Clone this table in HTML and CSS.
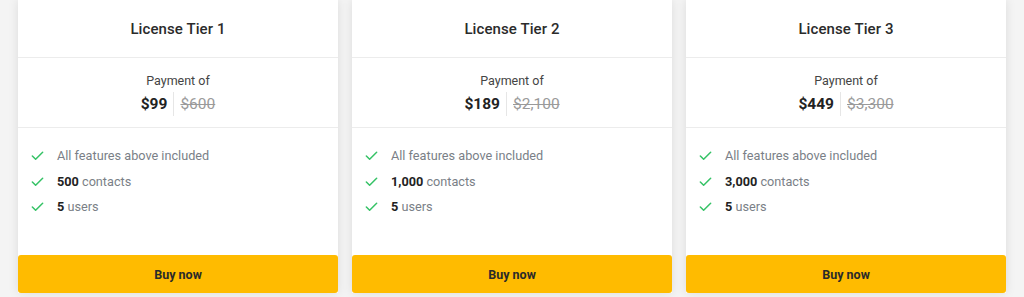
FILE: index.html
```html
<!DOCTYPE html>
<html lang="en">
<head>
<meta charset="utf-8">
<title>License Tiers</title>
<link rel="stylesheet" href="styles.css">
</head>
<body>
<div class="tiers">
  <div class="card">
    <div class="card-head"><h2 class="title">License Tier 1</h2></div>
    <div class="price-box">
      <div class="pay-label">Payment of</div>
      <div class="price-row"><span class="price">$99</span><span class="old">$600</span></div>
    </div>
    <ul class="features">
      <li><svg class="check" viewBox="0 0 16 16"><path d="M2.5 8.5l3.5 3.5 7.5-7.5"/></svg><span>All features above included</span></li>
      <li><svg class="check" viewBox="0 0 16 16"><path d="M2.5 8.5l3.5 3.5 7.5-7.5"/></svg><span><b>500</b> contacts</span></li>
      <li><svg class="check" viewBox="0 0 16 16"><path d="M2.5 8.5l3.5 3.5 7.5-7.5"/></svg><span><b>5</b> users</span></li>
    </ul>
    <button class="buy">Buy now</button>
  </div>
  <div class="card">
    <div class="card-head"><h2 class="title">License Tier 2</h2></div>
    <div class="price-box">
      <div class="pay-label">Payment of</div>
      <div class="price-row"><span class="price">$189</span><span class="old">$2,100</span></div>
    </div>
    <ul class="features">
      <li><svg class="check" viewBox="0 0 16 16"><path d="M2.5 8.5l3.5 3.5 7.5-7.5"/></svg><span>All features above included</span></li>
      <li><svg class="check" viewBox="0 0 16 16"><path d="M2.5 8.5l3.5 3.5 7.5-7.5"/></svg><span><b>1,000</b> contacts</span></li>
      <li><svg class="check" viewBox="0 0 16 16"><path d="M2.5 8.5l3.5 3.5 7.5-7.5"/></svg><span><b>5</b> users</span></li>
    </ul>
    <button class="buy">Buy now</button>
  </div>
  <div class="card">
    <div class="card-head"><h2 class="title">License Tier 3</h2></div>
    <div class="price-box">
      <div class="pay-label">Payment of</div>
      <div class="price-row"><span class="price">$449</span><span class="old">$3,300</span></div>
    </div>
    <ul class="features">
      <li><svg class="check" viewBox="0 0 16 16"><path d="M2.5 8.5l3.5 3.5 7.5-7.5"/></svg><span>All features above included</span></li>
      <li><svg class="check" viewBox="0 0 16 16"><path d="M2.5 8.5l3.5 3.5 7.5-7.5"/></svg><span><b>3,000</b> contacts</span></li>
      <li><svg class="check" viewBox="0 0 16 16"><path d="M2.5 8.5l3.5 3.5 7.5-7.5"/></svg><span><b>5</b> users</span></li>
    </ul>
    <button class="buy">Buy now</button>
  </div>
</div>
</body>
</html>
```

FILE: styles.css
```css
html, body {
  margin: 0;
  padding: 0;
  background: #f4f4f4;
  font-family: Roboto, "Liberation Sans", Arial, sans-serif;
  color: #222;
}
.tiers {
  display: grid;
  grid-template-columns: repeat(3, 320px);
  gap: 14px;
  padding: 0 18px;
  height: 297px;
  box-sizing: border-box;
}
.card {
  background: #fff;
  display: flex;
  flex-direction: column;
  height: 293px;
  box-shadow: 0 0 10px rgba(0, 0, 0, 0.10);
}
.card-head {
  height: 57px;
  display: flex;
  align-items: center;
  justify-content: center;
  border-bottom: 1px solid #ececec;
}
.title {
  margin: 0;
  font-size: 15px;
  font-weight: 500;
  color: #2b2b2b;
  letter-spacing: 0.1px;
}
.price-box {
  height: 70px;
  border-bottom: 1px solid #ececec;
  display: flex;
  flex-direction: column;
  align-items: center;
  padding-top: 15px;
  box-sizing: border-box;
}
.pay-label {
  font-size: 12.5px;
  color: #444;
  line-height: 16px;
}
.price-row {
  display: flex;
  align-items: center;
  margin-top: 3px;
  height: 24px;
}
.price {
  font-size: 15.5px;
  font-weight: 700;
  color: #222;
  padding-right: 6px;
  border-right: 1px solid #e6e6e6;
  line-height: 24px;
}
.old {
  font-size: 15.5px;
  color: #9a9a9a;
  text-decoration: line-through;
  padding-left: 6px;
  line-height: 24px;
}
.features {
  list-style: none;
  margin: 0;
  padding: 15px 0 0 12px;
  flex: 1;
}
.features li {
  display: flex;
  align-items: center;
  height: 25.5px;
  font-size: 12.7px;
  color: #7a7f87;
}
.features b {
  color: #222;
  font-weight: 700;
}
.check {
  width: 15px;
  height: 15px;
  margin-right: 12px;
  fill: none;
  stroke: #35c266;
  stroke-width: 1.6;
  stroke-linecap: round;
  stroke-linejoin: round;
}
.buy {
  height: 38px;
  border: 0;
  border-radius: 3px;
  background: #ffbb00;
  font-family: inherit;
  font-size: 12.5px;
  font-weight: 700;
  color: #2a2a2a;
  padding-top: 2px;
  cursor: pointer;
}
```
